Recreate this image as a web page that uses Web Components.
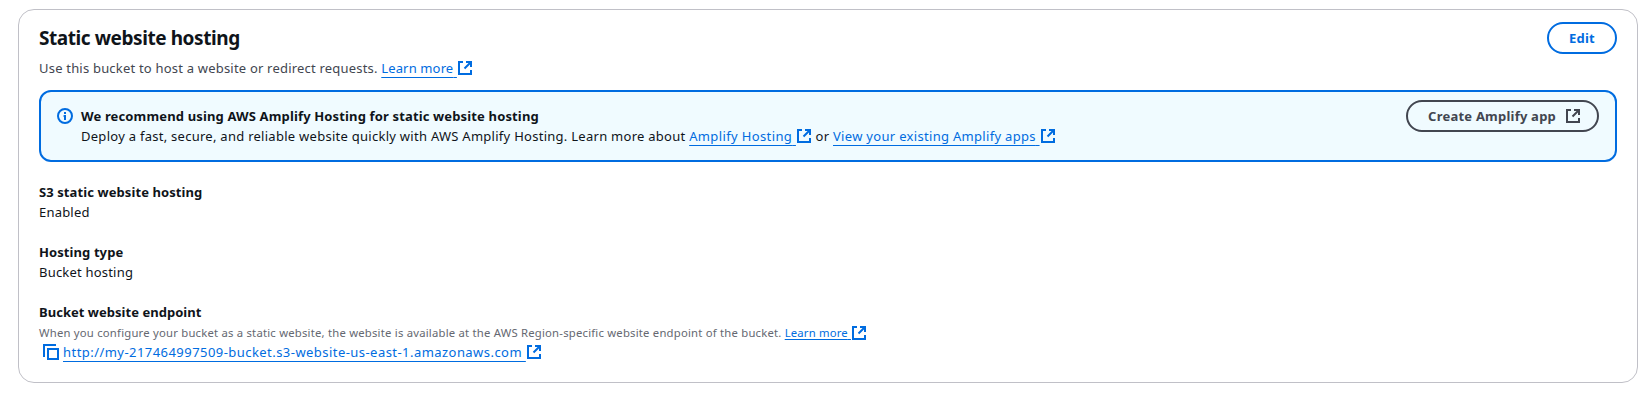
<!DOCTYPE html>
<html lang="en">
<head>
<meta charset="utf-8">
<title>Static website hosting</title>
<style>
  html { background: #fff; }
  body { margin: 0; padding: 9px 10px 0 18px; font: 13px/20px "Noto Sans", "Open Sans", sans-serif; color: #0f141a; }
</style>
</head>
<body>
<hosting-panel></hosting-panel>
<script>
const ICONS = {
  external: '<path d="M9 2h5v5M7.5 8.5 14 2"/><path d="M14 10v4H2V2h4"/>',
  copy: '<path d="M15 5H5v10h10V5Z"/><path d="M13 1H1v12"/>',
  info: '<circle cx="8" cy="8" r="7"/><path d="M8 12V7M6.6 8H8"/><path d="M7 5h2"/>'
};
const define = (name, render) => customElements.define(name, class extends HTMLElement {
  connectedCallback() {
    if (!this.shadowRoot) this.attachShadow({ mode: 'open' }).innerHTML = render(this);
  }
});

define('ui-icon', el => `
  <style>
    :host { display: inline-block; width: 16px; height: 16px; flex: none; }
    svg { display: block; fill: none; stroke: currentColor; stroke-width: 2; }
  </style>
  <svg width="16" height="16" viewBox="0 0 16 16">${ICONS[el.getAttribute('name')]}</svg>`);

define('ui-link', () => `
  <style>
    :host { display: inline; color: #006ce0; white-space: nowrap; }
    a { color: inherit; text-decoration: underline 1px; text-underline-offset: var(--underline, 4px); text-decoration-skip-ink: none; }
    ui-icon { vertical-align: var(--icon-shift, -3px); }
  </style><a><slot></slot>&nbsp;</a><ui-icon name="external"></ui-icon>`);

define('ui-button', el => `
  <style>
    :host { display: inline-flex; align-items: center; box-sizing: border-box; height: 32px; padding: 0 20px;
      border: 2px solid currentColor; border-radius: 20px; color: #006ce0; font-weight: 700; white-space: nowrap; letter-spacing: .25px; }
    :host([neutral]) { color: #424650; padding-right: 16px; }
    ui-icon { margin-left: 9px; }
  </style><slot></slot>${el.hasAttribute('neutral') ? '<ui-icon name="external"></ui-icon>' : ''}`);

define('ui-alert', () => `
  <style>
    :host { display: flex; box-sizing: border-box; height: 72px; padding: 8px 16px; background: #f0fbff;
      border: 2px solid #006ce0; border-radius: 12px; }
    ui-icon { color: #006ce0; margin: 8px 8px 0 0; }
    .body { flex: 1; padding-top: 6px; white-space: nowrap; }
    .title { font-weight: 700; letter-spacing: .145px; }
    .text { letter-spacing: .27px; }
  </style>
  <ui-icon name="info"></ui-icon>
  <div class="body"><div class="title"><slot name="title"></slot></div><div class="text"><slot></slot></div></div>
  <slot name="action"></slot>`);

define('ui-field', () => `
  <style>
    :host { display: block; white-space: nowrap; letter-spacing: .2px; }
    .label { font-weight: 700; letter-spacing: var(--label-spacing, .09px); }
  </style>
  <div class="label"><slot name="label"></slot></div><slot></slot>`);

define('hosting-panel', () => `
  <style>
    :host { display: block; box-sizing: border-box; height: 374px; padding: 12px 20px 0; border: 1px solid #c0c0c7; border-radius: 16px; }
    header { display: flex; justify-content: space-between; height: 68px; }
    h2 { margin: 4px 0 0; font: 700 19px/24px "Noto Sans", sans-serif; letter-spacing: -.43px; }
    p { margin: 8px 0 0; color: #424650; letter-spacing: .2px; white-space: nowrap; }
    .fields { display: grid; gap: 20px; margin-top: 20px; }
    .hint { font-size: 11.3px; line-height: 20px; color: #656871; letter-spacing: .21px; --icon-shift: -4px; --underline: 3px; }
    .hint { margin: 1px 0 -1px; }
    .endpoint { display: flex; padding-left: 4px; height: 20px; line-height: 20px; }
    .endpoint > ui-icon { color: #006ce0; margin: 2px 4px 0 0; }
  </style>
  <header>
    <div><h2>Static website hosting</h2>
    <p>Use this bucket to host a website or redirect requests. <ui-link style="letter-spacing:.14px">Learn more</ui-link></p></div>
    <ui-button>Edit</ui-button>
  </header>
  <ui-alert>
    <span slot="title">We recommend using AWS Amplify Hosting for static website hosting</span>
    Deploy a fast, secure, and reliable website quickly with AWS Amplify Hosting. Learn more about <ui-link style="letter-spacing:.37px">Amplify Hosting</ui-link> or <ui-link style="letter-spacing:.31px">View your existing Amplify apps</ui-link>
    <ui-button slot="action" neutral style="letter-spacing:.22px">Create Amplify app</ui-button>
  </ui-alert>
  <div class="fields">
    <ui-field><span slot="label">S3 static website hosting</span><div>Enabled</div></ui-field>
    <ui-field><span slot="label">Hosting type</span><div>Bucket hosting</div></ui-field>
    <ui-field style="--label-spacing:.03px"><span slot="label">Bucket website endpoint</span>
      <div class="hint">When you configure your bucket as a static website, the website is available at the AWS Region-specific website endpoint of the bucket. <ui-link style="letter-spacing:.17px;--underline:2px">Learn more</ui-link></div>
      <div class="endpoint"><ui-icon name="copy"></ui-icon><ui-link style="letter-spacing:.45px">http://my-217464997509-bucket.s3-website-us-east-1.amazonaws.com</ui-link></div>
    </ui-field>
  </div>`);
</script>
</body>
</html>
